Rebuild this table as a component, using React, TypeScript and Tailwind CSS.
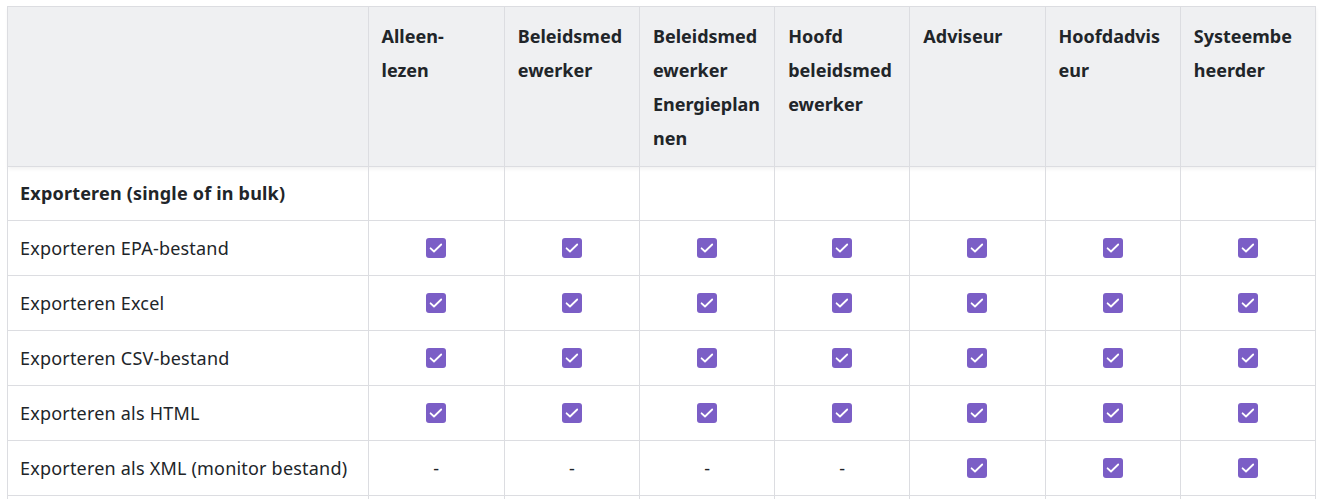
import clsx from "clsx";

type Row = {
  label: string;
  group?: boolean;
  values?: boolean[];
};

const roles: string[][] = [
  ["Alleen-", "lezen"],
  ["Beleidsmed", "ewerker"],
  ["Beleidsmed", "ewerker", "Energieplan", "nen"],
  ["Hoofd", "beleidsmed", "ewerker"],
  ["Adviseur"],
  ["Hoofdadvis", "eur"],
  ["Systeembe", "heerder"],
];

const all = [true, true, true, true, true, true, true];

const rows: Row[] = [
  { label: "Exporteren (single of in bulk)", group: true },
  { label: "Exporteren EPA-bestand", values: all },
  { label: "Exporteren Excel", values: all },
  { label: "Exporteren CSV-bestand", values: all },
  { label: "Exporteren als HTML", values: all },
  {
    label: "Exporteren als XML (monitor bestand)",
    values: [false, false, false, false, true, true, true],
  },
  // next row only peeks in at the bottom edge
  { label: "" },
];

const Check = () => (
  <span className="mx-auto flex w-5 h-5 items-center justify-center rounded-[3px] bg-[#7b5ec6]">
    <svg viewBox="0 0 20 20" className="w-5 h-5" fill="none">
      <path
        d="M4.6 10.3l3.4 3.2 7.2-7"
        stroke="#fff"
        strokeWidth="1.8"
        strokeLinecap="round"
        strokeLinejoin="round"
      />
    </svg>
  </span>
);

const cell = "border border-[#dcdde1] px-3";

export default function App() {
  return (
    <div className="bg-white h-[499px] overflow-hidden pt-[6px] px-[7px] font-['Noto_Sans',sans-serif] text-[#212529]">
      <table className="table-fixed border-collapse w-[1309px]">
        <colgroup>
          <col className="w-[360px]" />
          <col className="w-[136px]" />
          {roles.slice(1).map((_, i) => (
            <col key={i} className="w-[135px]" />
          ))}
        </colgroup>
        <thead>
          <tr className="bg-[#eff0f2] shadow-[0_2px_4px_rgba(0,0,0,0.06)]">
            <th className={cell} />
            {roles.map((lines, i) => (
              <th
                key={i}
                className={clsx(
                  cell,
                  "align-top text-left font-bold text-[18px] leading-[34px] pt-3 pb-[11px] pl-[13px]"
                )}
              >
                {lines.map((l, j) => (
                  <span key={j} className="block whitespace-nowrap">
                    {l}
                  </span>
                ))}
              </th>
            ))}
          </tr>
        </thead>
        <tbody>
          {rows.map((r, k) => (
            <tr key={k} className={k === 0 ? "h-[54px]" : "h-[55px]"}>
              <td
                className={clsx(
                  cell,
                  "text-[18px] tracking-[0.2px] whitespace-nowrap",
                  r.group && "font-bold"
                )}
              >
                {r.label}
              </td>
              {roles.map((_, i) => (
                <td key={i} className={clsx(cell, "text-center text-[18px]")}>
                  {r.values ? r.values[i] ? <Check /> : "-" : null}
                </td>
              ))}
            </tr>
          ))}
        </tbody>
      </table>
    </div>
  );
}
